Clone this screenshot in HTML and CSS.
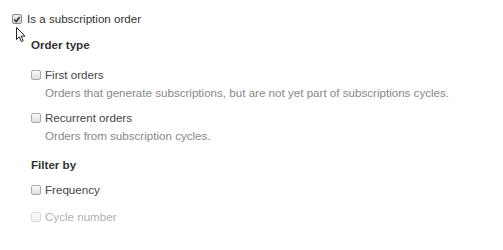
FILE: index.html
```html
<!DOCTYPE html>
<html>
<head>
<meta charset="utf-8">
<link rel="stylesheet" href="styles.css">
</head>
<body>
<div class="page">
  <div class="row main">
    <span class="cb checked"><svg width="9" height="9" viewBox="0 0 9 9"><path d="M1.5 4.5 L3.6 6.8 L7.6 1.6" fill="none" stroke="#333" stroke-width="1.8"/></svg></span>
    <span class="label">Is a subscription order</span>
    <svg class="cursor" width="11" height="16" viewBox="0 0 11 16"><path d="M0.5 0.5 L0.5 12.5 L3.3 9.8 L5.3 14.6 L7.2 13.8 L5.2 9.1 L9 9.1 Z" fill="#fff" stroke="#222" stroke-width="1"/></svg>
  </div>
  <div class="sub">
    <h4 class="heading first">Order type</h4>
    <div class="option">
      <div class="row">
        <span class="cb"></span>
        <span class="label">First orders</span>
      </div>
      <div class="desc">Orders that generate subscriptions, but are not yet part of subscriptions cycles.</div>
    </div>
    <div class="option">
      <div class="row">
        <span class="cb"></span>
        <span class="label">Recurrent orders</span>
      </div>
      <div class="desc">Orders from subscription cycles.</div>
    </div>
    <h4 class="heading filter">Filter by</h4>
    <div class="option freq">
      <div class="row">
        <span class="cb"></span>
        <span class="label">Frequency</span>
      </div>
    </div>
    <div class="option">
      <div class="row disabled">
        <span class="cb"></span>
        <span class="label">Cycle number</span>
      </div>
    </div>
  </div>
</div>
</body>
</html>
```
FILE: styles.css
```css
html, body {
  margin: 0;
  padding: 0;
  background: #fff;
}
body {
  font-family: "Liberation Sans", Arial, sans-serif;
  font-size: 11.6px;
  color: #444;
}
.page {
  padding: 11px 0 0 12px;
}
.row {
  display: flex;
  align-items: center;
  line-height: 16px;
  height: 16px;
  position: relative;
}
.cb {
  box-sizing: border-box;
  width: 10px;
  height: 10px;
  margin-right: 4px;
  border: 1px solid #a9a9a9;
  border-radius: 2px;
  background: linear-gradient(#fafafa, #dedede);
  display: flex;
  align-items: center;
  justify-content: center;
  flex: none;
}
.main .cb {
  margin-right: 5px;
}
.cb.checked {
  background: linear-gradient(#f0f0f0, #d0d0d0);
  border-color: #8a8a8a;
}
.main .label {
  color: #333;
}
.cursor {
  position: absolute;
  left: 4px;
  top: 16px;
}
.sub {
  padding-left: 19px;
  padding-top: 10px;
}
.heading {
  margin: 0;
  font-size: 11.6px;
  font-weight: bold;
  color: #333;
  line-height: 16px;
}
.heading.first {
  margin-bottom: 14px;
}
.heading.filter {
  margin-top: 13px;
  margin-bottom: 9px;
}
.option {
  margin-bottom: 9px;
}
.option.freq {
  margin-bottom: 11px;
}
.desc {
  margin-top: 1px;
  padding-left: 14px;
  color: #888;
  line-height: 17px;
}
.disabled .label {
  color: #b0b0b0;
}
.disabled .cb {
  border-color: #dcdcdc;
  background: linear-gradient(#fcfcfc, #f0f0f0);
}
```
